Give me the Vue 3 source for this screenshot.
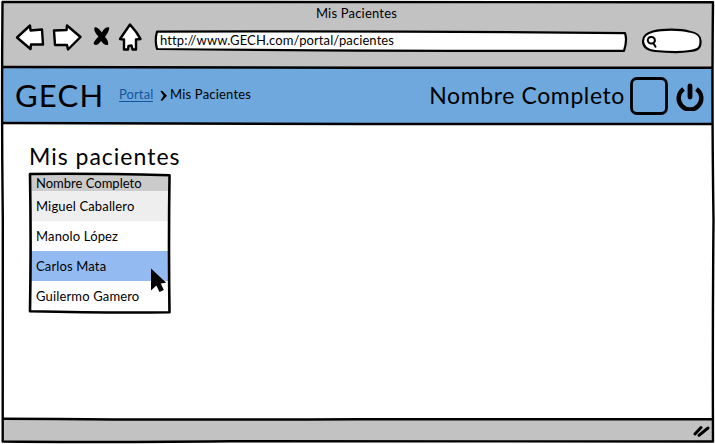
<script setup>
const patients = [
  { name: 'Miguel Caballero', cls: 'alt' },
  { name: 'Manolo López', cls: '' },
  { name: 'Carlos Mata', cls: 'selected' },
  { name: 'Guilermo Gamero', cls: '' }
]
</script>

<template>
  <div class="window">
    <header class="chrome">
      <div class="title"><span>Mis Pacientes</span></div>
      <div class="toolbar">
        <svg class="nav" width="144" height="36" viewBox="0 0 144 36">
          <g fill="#fff" stroke="#000" stroke-width="2.4" stroke-linejoin="round">
            <path d="M17 15.500 L30 3.500 L30.500 8.500 L42 7.500 L43 22.500 L31 22.500 L30.500 27 Z" />
            <path d="M54 8.500 L66.500 8 L67 3.500 L80.500 15 L68 27.500 L67 23 L55 23 Z" />
            <path d="M130 2.500 L120 17 L124 17.500 L124 27.500 L128 27.500 L128.500 24 L131.500 23.500 L132.500 27.500 L136 27.500 L136 17.500 L140.500 17 L136.500 10.500 Z" />
          </g>
          <path d="M94.500 5.500 C97 4.500 100 8 101.800 10.500 C104 6 107 4.500 109.300 5.500 C109.500 8.500 107 12 105 15 C107.500 17.500 109 21 107.800 23 C105 23.500 103 21.500 101 19 C99 22 96 24.500 93.800 22 C93.500 19.500 96 17.500 98.500 14.500 C96 12 93.500 8.500 94.500 5.500 Z" />
        </svg>
        <div class="address">
          <svg class="shape" width="474" height="22" viewBox="0 0 474 22">
            <path d="M3 1.700 Q230 0.500 471 3.200 Q473.500 10 470 20.800 Q230 21.500 3 19 Q0.500 10 3 1.700 Z" fill="#fff" stroke="#000" stroke-width="2.200" stroke-linejoin="round" />
          </svg>
          <span>http://www.GECH.com/portal/pacientes</span>
        </div>
        <svg class="search" width="62" height="26" viewBox="0 0 62 26">
          <path d="M12 3.500 C22 1 39 1 48 3.500 C57 5 60 8 59.500 14 C59.500 21 56 22 49 23 C38 25 25 24 14 23 C5 22 2 18 2 13 C2 8 6 5 12 3.500 Z" fill="#fff" stroke="#000" stroke-width="2.200" />
          <path d="M7.500 10 C9 8.500 12 8.500 13.500 10.500 C14.500 13 13.300 15.500 10.500 15.500 C7.500 16 5.700 12.500 7.500 10 Z M12.500 15.300 L14.500 18.800" fill="none" stroke="#000" stroke-width="2" stroke-linecap="round" />
        </svg>
      </div>
    </header>

    <nav class="bar">
      <span class="brand">GECH</span>
      <a class="portal">Portal</a>
      <svg class="chev" width="8" height="12" viewBox="0 0 8 12">
        <path d="M0.300 1 L2.200 0.800 L7 5.800 L2.300 10.800 L0.500 10.600 L3.600 5.800 Z" />
      </svg>
      <span class="crumb">Mis Pacientes</span>
      <span class="user">Nombre Completo</span>
      <svg class="avatar" width="38" height="38" viewBox="0 0 38 38">
        <rect x="1.500" y="1.500" width="35" height="35" rx="5.500" fill="none" stroke="#000" stroke-width="2.800" />
      </svg>
      <svg class="power" width="28" height="28" viewBox="0 0 28 28">
        <g fill="none" stroke="#000">
          <path d="M7.500 6 A11.300 11.300 0 1 0 20.500 6" stroke-width="4.400" />
          <path d="M14 3 V14" stroke-width="4.800" stroke-linecap="round" />
        </g>
      </svg>
    </nav>

    <main class="content">
      <h1>Mis pacientes</h1>
      <section class="table">
        <div class="head">Nombre Completo</div>
        <div v-for="p in patients" :key="p.name" class="row" :class="p.cls">{{ p.name }}</div>
        <svg class="border" width="144" height="142" viewBox="0 0 144 142">
          <path d="M3 2 Q60 1.200 142.500 3.200 Q141.500 70 142.500 140.300 Q80 141 3 139.300 Q4.200 70 3 2 Z" fill="none" stroke="#000" stroke-width="2.600" stroke-linejoin="round" />
        </svg>
        <svg class="cursor" width="18" height="26" viewBox="0 0 18 26">
          <path d="M1 0.500 L16.200 14.700 L10.800 15.400 L13.800 22 L9.500 24 L6.400 17.500 L1 22.500 Z" />
        </svg>
      </section>
    </main>

    <footer class="status">
      <svg width="18" height="14" viewBox="0 0 18 14">
        <path d="M2 11 L8 4.500 M6 12.300 L15 5" fill="none" stroke="#000" stroke-width="3" stroke-linecap="round" />
      </svg>
    </footer>

    <svg class="frame" width="715" height="444" viewBox="0 0 715 444">
      <g fill="none" stroke="#000" stroke-width="2.400" stroke-linejoin="round">
        <path d="M2.500 2 Q350 1.600 713 2.200 Q711.800 100 713.500 220 Q712.500 330 713 441.500 Q500 440.300 230 441.200 Q80 442.600 2.700 441.500 Q3.200 330 2.800 220 Q1.500 110 2.500 2 Z" />
        <path d="M2.500 67 Q200 68 360 67.800 T713 67.800" />
        <path d="M2.500 123 Q200 124.200 360 124 T713 124" />
        <path d="M2.500 418.700 Q170 420 360 419.300 T713 419.300" />
      </g>
    </svg>
  </div>
</template>

<style>
body { margin: 0; background: #fff; overflow: hidden; }
</style>

<style scoped>
.window {
  position: relative;
  width: 715px;
  height: 444px;
  box-sizing: border-box;
  padding: 2px 2px 3px 3px;
  display: flex;
  flex-direction: column;
  font-family: Lato, "Liberation Sans", sans-serif;
  font-size: 13px;
  color: #000;
  background: #fff;
}
.frame { position: absolute; left: 0; top: 0; pointer-events: none; }
.chrome { height: 66px; background: #c2c2c2; flex: none; }
.title { height: 17px; padding: 3px 3px 0 0; line-height: 17px; text-align: center; letter-spacing: 0.2px; }
.toolbar { height: 36px; display: flex; align-items: flex-start; }
.nav { flex: none; display: block; margin-left: -3px; }
.address { position: relative; width: 474px; height: 22px; margin: 8px 0 0 10px; padding-left: 6px; box-sizing: border-box; line-height: 21px; flex: none; letter-spacing: 0.1px; white-space: nowrap; }
.address span { position: relative; }
.shape { position: absolute; left: 0; top: 0; }
.search { margin: 6px 0 0 13px; flex: none; }
.bar { height: 56px; flex: none; background: #6fa8dc; display: flex; align-items: center; padding: 0 9px 0 12px; white-space: nowrap; }
.brand { font-size: 31px; width: 104px; line-height: 50px; letter-spacing: 1.2px; margin-bottom: 2px; }
.portal { color: #1356a0; width: 34px; line-height: 14px; border-bottom: 1px solid #1356a0; margin-bottom: 3px; letter-spacing: 0.1px; }
.chev { margin: 0 2px 0 7px; }
.crumb { letter-spacing: 0.2px; margin-bottom: 4px; }
.user { margin-left: auto; font-size: 23px; letter-spacing: 0.6px; margin-bottom: 2px; }
.avatar { margin-left: 5px; flex: none; }
.power { margin: 1px 0 0 8px; flex: none; }
.content { flex: 1; padding: 18px 0 0 26px; }
h1 { margin: 0; font-size: 23px; line-height: 28px; height: 32px; font-weight: 400; letter-spacing: 1px; }
.table { position: relative; width: 137px; margin-left: 2px; }
.head { background: #cbcbcb; height: 17px; line-height: 17px; padding: 1px 0 0 5px; box-sizing: border-box; }
.row { height: 30px; line-height: 30px; padding-left: 5px; background: #fff; letter-spacing: 0.15px; }
.alt { background: #eee; }
.selected { background: #94bbf1; }
.border { position: absolute; left: -4px; top: -2px; }
.cursor { position: absolute; left: 119px; top: 94px; }
.status { height: 22px; flex: none; background: #c2c2c2; display: flex; justify-content: flex-end; align-items: center; padding-right: 2px; }
</style>
